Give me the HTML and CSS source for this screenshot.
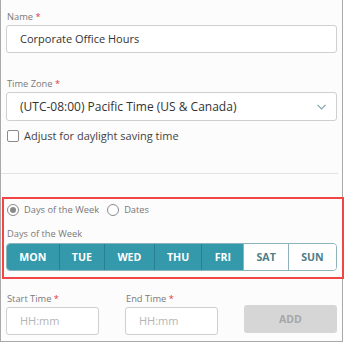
FILE: index.html
```html
<!DOCTYPE html>
<html>
<head>
<meta charset="utf-8">
<link rel="stylesheet" href="styles.css">
</head>
<body>
<div class="frame">
  <div class="field">
    <label class="label">Name <span class="req">*</span></label>
    <div class="input">Corporate Office Hours</div>
  </div>
  <div class="field tz">
    <label class="label">Time Zone <span class="req">*</span></label>
    <div class="input select">
      <span>(UTC-08:00) Pacific Time (US &amp; Canada)</span>
      <svg class="chev" width="9" height="6" viewBox="0 0 9 6"><path d="M0.5 0.8 L4.5 4.8 L8.5 0.8" fill="none" stroke="#7ea4ae" stroke-width="1.2"/></svg>
    </div>
  </div>
  <div class="check-row">
    <span class="checkbox"></span>
    <span>Adjust for daylight saving time</span>
  </div>
  <div class="divider"></div>
  <div class="schedule">
    <div class="radio-row">
      <span class="radio on"></span><span class="rlabel">Days of the Week</span>
      <span class="radio"></span><span class="rlabel">Dates</span>
    </div>
    <div class="label days-label">Days of the Week</div>
    <div class="days">
      <button class="day sel">MON</button>
      <button class="day sel">TUE</button>
      <button class="day sel">WED</button>
      <button class="day sel">THU</button>
      <button class="day sel">FRI</button>
      <button class="day">SAT</button>
      <button class="day">SUN</button>
    </div>
  </div>
  <div class="times">
    <div class="tcol">
      <label class="label">Start Time <span class="req">*</span></label>
      <div class="input tinput">HH:mm</div>
    </div>
    <div class="tcol">
      <label class="label">End Time <span class="req">*</span></label>
      <div class="input tinput">HH:mm</div>
    </div>
    <div class="tcol addcol">
      <button class="add">ADD</button>
    </div>
  </div>
  <div class="highlight"></div>
</div>
</body>
</html>
```

FILE: styles.css
```css
* { box-sizing: border-box; }
html, body { margin: 0; padding: 0; background: #ffffff; }
body { font-family: "Open Sans", "Noto Sans", sans-serif; color: #333; }

.frame {
  position: relative;
  width: 343px;
  height: 342px;
  background: #fcfcfc;
  border-left: 1px solid #a9a9a9;
  border-right: 1px solid #a9a9a9;
  border-bottom: 1px solid #a9a9a9;
  padding: 9px 5px 0 5px;
}

.label {
  display: block;
  font-size: 9.3px;
  line-height: 15px;
  color: #7a7a7a;
  padding-left: 1px;
}
.req { color: #e03a3a; }

.input {
  margin-top: 1px;
  height: 28px;
  border: 1px solid #cfcfcf;
  border-radius: 3px;
  background: #fff;
  font-size: 11px;
  line-height: 26px;
  padding-left: 13px;
  color: #333;
}

.tz { margin-top: 23px; }
.select {
  height: 29px;
  font-size: 12px;
  display: flex;
  align-items: center;
  justify-content: space-between;
  padding-right: 10px;
}
.chev { margin-top: 1px; }

.check-row {
  display: flex;
  align-items: center;
  gap: 5px;
  margin-top: 7px;
  font-size: 11px;
  line-height: 16px;
  color: #444;
  padding-left: 1px;
}
.checkbox {
  width: 12px;
  height: 12px;
  border: 1px solid #8a8a8a;
  border-radius: 2px;
  background: #fff;
}

.divider {
  margin: 29px 0 0 -5px;
  width: 337px;
  height: 1px;
  background: #e2e2e2;
}

.schedule { padding-top: 28px; }

.radio-row {
  display: flex;
  align-items: center;
  font-size: 9.3px;
  line-height: 15px;
  color: #777;
  padding-left: 1px;
}
.radio {
  width: 12px;
  height: 12px;
  border: 1px solid #8a8a8a;
  border-radius: 50%;
  background: #fff;
  position: relative;
  margin-right: 5px;
}
.radio.on::after {
  content: "";
  position: absolute;
  left: 2px; top: 2px;
  width: 6px; height: 6px;
  border-radius: 50%;
  background: #8a8a8a;
}
.rlabel { margin-right: 8px; }

.days-label { margin-top: 9px; }

.days {
  margin-top: 2px;
  display: flex;
  height: 28px;
  border: 1px solid #8fb3bc;
  border-radius: 4px;
  overflow: hidden;
  width: 331px;
}
.day {
  flex: 1 1 auto;
  padding: 0;
  border: none;
  border-left: 1px solid #8fb3bc;
  background: #fff;
  color: #4f7d89;
  font-family: "Open Sans", "Noto Sans", sans-serif;
  font-weight: 700;
  font-size: 10.6px;
}
.day:first-child { border-left: none; }
.day.sel {
  background: #3399ab;
  color: #fff;
  border-left-color: #277f8f;
}

.times {
  margin-top: 20px;
  display: grid;
  grid-template-columns: 93px 93px 93px;
  column-gap: 26px;
}
.tinput {
  height: 28px;
  color: #b5b5b5;
  font-size: 11px;
  line-height: 26px;
  padding-left: 13px;
}
.addcol { display: flex; align-items: flex-end; padding-bottom: 2px; }
.add {
  width: 93px;
  height: 28px;
  border: none;
  border-radius: 3px;
  background: #d6d6d6;
  color: #a6a6a6;
  font-family: "Open Sans", "Noto Sans", sans-serif;
  font-weight: 700;
  font-size: 10.5px;
}

.highlight {
  position: absolute;
  left: 1px;
  top: 197px;
  width: 342px;
  height: 82px;
  border: 2px solid #f24545;
}
```
